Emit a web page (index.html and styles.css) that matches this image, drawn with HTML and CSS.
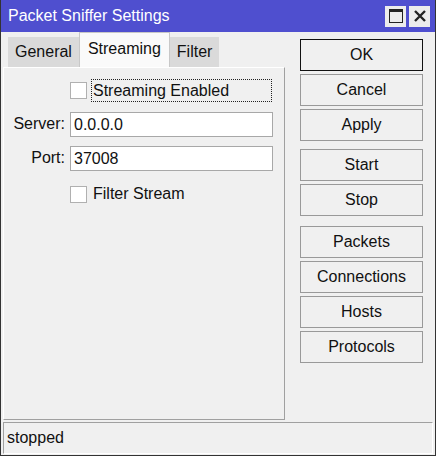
FILE: index.html
```html
<!DOCTYPE html>
<html lang="en">
<head>
	<meta charset="UTF-8">
	<title>Packet Sniffer Settings</title>
	<link rel="stylesheet" href="styles.css">
</head>
<body>
	<div class="win">
		<div class="title">
			<span class="title-text">Packet Sniffer Settings</span>
			<span class="tbtn"><svg width="14" height="14" viewBox="0 0 14 14"><rect x="0.5" y="0.5" width="13" height="13" fill="none" stroke="#222"/><rect x="0" y="0" width="14" height="3" fill="#222"/></svg></span>
			<span class="tbtn"><svg width="14" height="14" viewBox="0 0 14 14"><path d="M2 2 L12 12 M12 2 L2 12" stroke="#222" stroke-width="2.4"/></svg></span>
		</div>
		<div class="main">
			<div class="left">
				<ul class="tabs">
					<li>General</li>
					<li class="active">Streaming</li>
					<li>Filter</li>
				</ul>
				<div class="panel">
					<div class="row">
						<span class="lbl"></span>
						<span class="chk"></span>
						<span class="focus">Streaming Enabled</span>
					</div>
					<div class="row">
						<span class="lbl">Server:</span>
						<span class="inp">0.0.0.0</span>
					</div>
					<div class="row">
						<span class="lbl">Port:</span>
						<span class="inp">37008</span>
					</div>
					<div class="row last">
						<span class="lbl"></span>
						<span class="chk"></span>
						<span class="ctext">Filter Stream</span>
					</div>
				</div>
			</div>
			<div class="right">
				<div class="btn def">OK</div>
				<div class="btn">Cancel</div>
				<div class="btn">Apply</div>
				<div class="sep"></div>
				<div class="btn">Start</div>
				<div class="btn">Stop</div>
				<div class="sep wide"></div>
				<div class="btn">Packets</div>
				<div class="btn">Connections</div>
				<div class="btn">Hosts</div>
				<div class="btn">Protocols</div>
			</div>
		</div>
		<div class="status">stopped</div>
	</div>
</body>
</html>
```

FILE: styles.css
```css
*{box-sizing: border-box;}
body,ul,li{margin: 0;padding: 0;}
body{font: 16px/1.2 "Liberation Sans", Arial, sans-serif;color: #111;background: #fff;}
ul{list-style: none;}
.win{width: 436px;height: 456px;border: 1px solid #333;border-top: 0;background: #f0f0f0;display: flex;flex-direction: column;padding: 0 2px 1px 2px;}
.title{height: 32px;margin: 0 -2px;background: #4f4fcf;display: flex;align-items: center;padding: 0 5px 0 7px;gap: 3px;}
.title-text{flex: 1;color: #fff;font-size: 16px;}
.tbtn{width: 21px;height: 21px;background: #ececec;display: flex;align-items: center;justify-content: center;}
.main{flex: 1;display: flex;}
.left{width: 282px;display: flex;flex-direction: column;}
.tabs{display: flex;align-items: flex-end;height: 35px;padding-left: 5px;}
.tabs li{height: 30px;line-height: 30px;padding: 0 7px;background: #dadada;}
.tabs li.active{height: 35px;line-height: 32px;background: #fafafa;border: 1px solid #c8c8c8;border-bottom: 0;padding: 0 8px;}
.panel{flex: 1;border: 1px solid #a0a0a0;border-top-color: #fff;border-left-color: #fff;margin-bottom: 2px;padding-top: 8px;}
.row{display: flex;align-items: center;height: 34px;}
.row:first-child{height: 28px;margin-bottom: 3px;}
.row.last{margin-top: 2px;}
.lbl{width: 66px;text-align: right;padding-right: 5px;}
.chk{width: 17px;height: 17px;background: #fff;border: 1px solid #b0b0b0;margin-right: 4px;}
.focus{border: 1px dotted #222;width: 181px;height: 23px;line-height: 21px;padding-left: 1px;}
.ctext{padding-left: 2px;}
.inp{width: 203px;height: 25px;line-height: 23px;background: #fff;border: 1px solid #a8a8a8;padding-left: 3px;}
.right{flex: 1;display: flex;flex-direction: column;padding: 7px 0 0 15px;}
.btn{width: 123px;height: 32px;line-height: 30px;text-align: center;border: 1px solid #999;margin-bottom: 3px;}
.btn.def{border-color: #111;}
.sep{height: 5px;}
.sep.wide{height: 7px;}
.status{height: 32px;border: 1px solid #a0a0a0;border-right-color: #fff;border-bottom-color: #fff;line-height: 30px;padding-left: 3px;}
```
